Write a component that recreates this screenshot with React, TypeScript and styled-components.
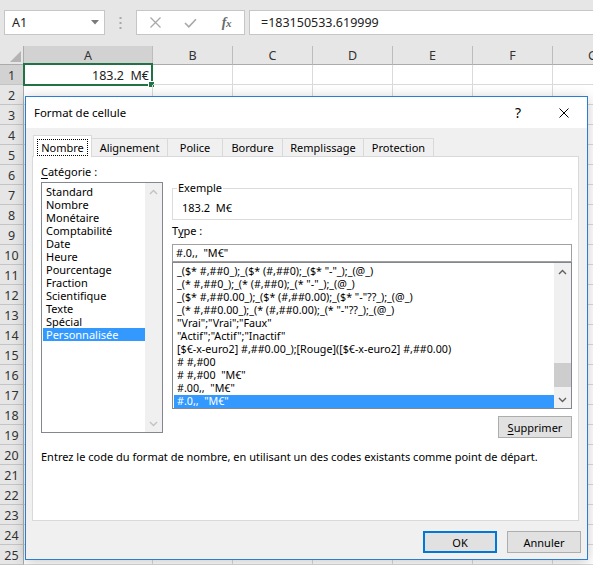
import React from 'react';
import styled, { createGlobalStyle, css } from 'styled-components';

const GlobalStyle = createGlobalStyle`
  html, body { margin: 0; padding: 0; }
  body {
    width: 593px; height: 565px; overflow: hidden;
    background: #e6e6e6;
    font-family: "Noto Sans", "Open Sans", sans-serif;
  }
  * { box-sizing: border-box; }
`;

const Screen = styled.div`
  position: relative;
  width: 593px;
  height: 565px;
  overflow: hidden;
  background: #e6e6e6;
`;

/* ---------- formula bar ---------- */
const FormulaBar = styled.div`
  display: flex;
  align-items: center;
  height: 46px;
  padding: 10px 0 11px 4px;
`;

const NameBox = styled.div`
  width: 101px;
  height: 25px;
  background: #fff;
  border: 1px solid #c6c6c6;
  display: flex;
  align-items: center;
  justify-content: space-between;
  padding: 0 5px 0 7px;
  font-size: 12.5px;
  color: #222;
`;

const Separator = styled.div`
  width: 31px;
  display: flex;
  justify-content: center;
  align-items: center;
`;

const FxBox = styled.div`
  width: 109px;
  height: 25px;
  background: #fff;
  border: 1px solid #c6c6c6;
  display: flex;
  align-items: center;
  padding-left: 1px;
`;

const FxSlot = styled.div`
  width: 36px;
  display: flex;
  align-items: center;
  justify-content: center;
`;

const FxText = styled.span`
  font-family: "Liberation Serif", serif;
  font-style: italic;
  font-weight: bold;
  color: #6a6a6a;
  font-size: 14px;
  letter-spacing: -0.5px;
  & > small { font-size: 11px; }
`;

const FormulaInput = styled.div`
  flex: 1;
  height: 25px;
  margin-left: 4px;
  background: #fff;
  border: 1px solid #c6c6c6;
  border-right: none;
  display: flex;
  align-items: center;
  padding-left: 11px;
  font-size: 12.5px;
  color: #222;
`;

/* ---------- sheet ---------- */
const Sheet = styled.div`
  display: grid;
  grid-template-columns: 24px 129px repeat(6, 80px);
  grid-template-rows: 19px repeat(25, 20px);
  background: #fff;
  font-family: "Noto Sans", sans-serif;
`;

const Corner = styled.div`
  background: #e6e6e6;
  border-right: 1px solid #ababab;
  border-bottom: 1px solid #ababab;
  display: flex;
  align-items: flex-end;
  justify-content: flex-end;
  padding: 0 2px 2px 0;
`;

const ColHeader = styled.div<{ $sel?: boolean }>`
  background: ${p => (p.$sel ? '#d2d2d2' : '#e6e6e6')};
  border-right: 1px solid #bcbcbc;
  border-bottom: 1px solid ${p => (p.$sel ? '#217346' : '#ababab')};
  display: flex;
  align-items: center;
  justify-content: center;
  font-size: 12.5px;
  color: #333;
`;

const RowHeader = styled.div<{ $sel?: boolean }>`
  background: ${p => (p.$sel ? '#d2d2d2' : '#e6e6e6')};
  border-right: 1px solid ${p => (p.$sel ? '#217346' : '#ababab')};
  border-bottom: 1px solid #c4c4c4;
  display: flex;
  align-items: center;
  justify-content: center;
  padding-top: 2px;
  font-size: 12.5px;
  color: #333;
`;

const Cell = styled.div`
  position: relative;
  border-right: 1px solid #dadada;
  border-bottom: 1px solid #dadada;
  display: flex;
  align-items: center;
  justify-content: flex-end;
  padding: 2px 3px 0 0;
  font-size: 12.5px;
  color: #222;
  white-space: pre;
`;

const Selection = styled.div`
  position: absolute;
  left: -1px;
  top: -2px;
  right: -1px;
  bottom: -2px;
  border: 2px solid #217346;
  pointer-events: none;
  &::after {
    content: '';
    position: absolute;
    right: -4px;
    bottom: -4px;
    width: 5px;
    height: 5px;
    background: #217346;
    border: 1px solid #fff;
  }
`;

/* ---------- dialog ---------- */
const Dialog = styled.div`
  position: absolute;
  left: 25px;
  top: 96px;
  width: 563px;
  height: 464px;
  border: 1px solid #2b7cd3;
  background: #f0f0f0;
  display: flex;
  flex-direction: column;
  box-shadow: 0 2px 12px rgba(0, 0, 0, 0.22);
  font-family: "Noto Sans", sans-serif;
  font-size: 11px;
  color: #000;
`;

const TitleBar = styled.div`
  height: 31px;
  background: #fff;
  display: flex;
  align-items: center;
  padding-left: 8px;
`;

const Title = styled.div`
  flex: 1;
  font-size: 11.4px;
`;

const TitleButton = styled.div`
  width: 46px;
  height: 31px;
  display: flex;
  align-items: center;
  justify-content: center;
  font-size: 14px;
`;

const Body = styled.div`
  flex: 1;
  display: flex;
  flex-direction: column;
  padding: 7px 8px 0 6px;
`;

const TabsRow = styled.div`
  height: 21px;
  display: flex;
  align-items: flex-end;
  padding-left: 1px;
`;

const Tab = styled.div<{ $w: number; $active?: boolean }>`
  width: ${p => p.$w}px;
  height: ${p => (p.$active ? 22 : 18)}px;
  margin-left: -1px;
  &:first-child { margin-left: 0; }
  margin-bottom: ${p => (p.$active ? -1 : 0)}px;
  border: 1px solid #d9d9d9;
  border-bottom: none;
  background: ${p => (p.$active ? '#fff' : '#f0f0f0')};
  position: relative;
  z-index: ${p => (p.$active ? 1 : 0)};
  display: flex;
  align-items: center;
  justify-content: center;
  font-size: 11px;
  ${p =>
    p.$active &&
    css`
      align-items: flex-end;
      padding-bottom: 1px;
    `}
`;

const FocusLabel = styled.span`
  border: 1px dotted #000;
  padding: 0 3px;
  line-height: 15px;
`;

const Panel = styled.div`
  height: 365px;
  background: #fff;
  border: 1px solid #d9d9d9;
  padding: 7px 0 0 8px;
  display: flex;
  flex-direction: column;
`;

const TopRow = styled.div`
  display: flex;
  gap: 9px;
  align-items: flex-start;
`;

const LeftCol = styled.div`
  width: 122px;
  display: flex;
  flex-direction: column;
`;

const RightCol = styled.div`
  width: 400px;
  display: flex;
  flex-direction: column;
  padding-top: 17px;
`;

const Label = styled.div<{ $mt?: number }>`
  line-height: 16px;
  margin-top: ${p => p.$mt ?? 0}px;
  margin-bottom: 2px;
  & u { text-decoration-thickness: 1px; text-underline-offset: 2px; }
`;

const ListBox = styled.div<{ $h: number; $fs?: number }>`
  height: ${p => p.$h}px;
  border: 1px solid #828790;
  background: #fff;
  display: flex;
  font-size: ${p => p.$fs ?? 11}px;
`;

const Items = styled.div`
  flex: 1;
  padding: 2px 0 0 1px;
  overflow: hidden;
  display: flex;
  flex-direction: column;
`;

const Item = styled.div<{ $sel?: boolean }>`
  height: 13px;
  line-height: 13px;
  padding-left: 3px;
  white-space: pre;
  overflow: clip;
  overflow-clip-margin: 3px;
  background: ${p => (p.$sel ? '#3399ff' : 'transparent')};
  color: ${p => (p.$sel ? '#fff' : '#000')};
  flex-shrink: 0;
`;

const ScrollBar = styled.div`
  width: 17px;
  background: #f0f0f0;
  display: flex;
  flex-direction: column;
`;

const ScrollArrow = styled.div`
  height: 17px;
  display: flex;
  align-items: center;
  justify-content: center;
`;

const Track = styled.div`
  flex: 1;
  display: flex;
  flex-direction: column;
  justify-content: flex-end;
  align-items: center;
  padding-bottom: 4px;
`;

const Thumb = styled.div`
  width: 17px;
  height: 24px;
  background: #cdcdcd;
`;

const Fieldset = styled.fieldset`
  margin: 0;
  border: 1px solid #dcdcdc;
  padding: 6px 0 4px 9px;
  min-width: 0;
`;

const Legend = styled.legend`
  padding: 0 1px;
  margin-left: -5px;
  line-height: 14px;
`;

const SampleValue = styled.div`
  line-height: 14px;
  white-space: pre;
`;

const TypeInput = styled.div`
  height: 18px;
  margin-top: 3px;
  border: 1px solid #a0a0a0;
  padding-left: 3px;
  line-height: 16px;
  font-size: 10.8px;
  white-space: pre;
`;

const Button = styled.div<{ $default?: boolean }>`
  width: 74px;
  height: 22px;
  background: #e1e1e1;
  border: ${p => (p.$default ? '2px solid #0078d7' : '1px solid #adadad')};
  display: flex;
  align-items: center;
  justify-content: center;
  font-size: 11px;
  & u { text-underline-offset: 2px; }
`;

const DeleteRow = styled.div`
  display: flex;
  justify-content: flex-end;
  margin-top: 7px;
`;

const Hint = styled.div`
  margin-top: 11px;
  line-height: 16px;
`;

const Footer = styled.div`
  display: flex;
  justify-content: flex-end;
  gap: 10px;
  margin-top: 10px;
  margin-right: -2px;
`;

/* ---------- icons ---------- */
const Caret = () => (
  <svg width="8" height="5" viewBox="0 0 8 5">
    <polygon points="0,0 8,0 4,4.5" fill="#7a7a7a" />
  </svg>
);

const Dots = () => (
  <svg width="3" height="12" viewBox="0 0 3 12">
    <rect x="0.5" y="0" width="2" height="2" fill="#a8a8a8" />
    <rect x="0.5" y="5" width="2" height="2" fill="#a8a8a8" />
    <rect x="0.5" y="10" width="2" height="2" fill="#a8a8a8" />
  </svg>
);

const XIcon = ({ size, color, w }: { size: number; color: string; w: number }) => (
  <svg width={size} height={size} viewBox={`0 0 ${size} ${size}`}>
    <path d={`M0.5 0.5 L${size - 0.5} ${size - 0.5} M${size - 0.5} 0.5 L0.5 ${size - 0.5}`} stroke={color} strokeWidth={w} fill="none" />
  </svg>
);

const Check = () => (
  <svg width="13" height="10" viewBox="0 0 13 10">
    <path d="M1 5 L4.8 8.8 L12 1.2" stroke="#a8a8a8" strokeWidth="1.6" fill="none" />
  </svg>
);

const Chevron = ({ up, color }: { up?: boolean; color: string }) => (
  <svg width="9" height="6" viewBox="0 0 9 6">
    <path d={up ? 'M1 5 L4.5 1.5 L8 5' : 'M1 1 L4.5 4.5 L8 1'} stroke={color} strokeWidth="1.4" fill="none" />
  </svg>
);

const CornerTriangle = () => (
  <svg width="11" height="11" viewBox="0 0 11 11">
    <polygon points="11,0 11,11 0,11" fill="#b4b4b4" />
  </svg>
);

/* ---------- data ---------- */
const columns = ['A', 'B', 'C', 'D', 'E', 'F', 'G'];
const rows = Array.from({ length: 25 }, (_, i) => i + 1);

const tabs: { label: string; w: number }[] = [
  { label: 'Nombre', w: 59 },
  { label: 'Alignement', w: 77 },
  { label: 'Police', w: 56 },
  { label: 'Bordure', w: 61 },
  { label: 'Remplissage', w: 82 },
  { label: 'Protection', w: 71 },
];

const categories = [
  'Standard',
  'Nombre',
  'Monétaire',
  'Comptabilité',
  'Date',
  'Heure',
  'Pourcentage',
  'Fraction',
  'Scientifique',
  'Texte',
  'Spécial',
  'Personnalisée',
];

const formats = [
  '_($* #,##0_);_($* (#,##0);_($* "-"_);_(@_)',
  '_(* #,##0_);_(* (#,##0);_(* "-"_);_(@_)',
  '_($* #,##0.00_);_($* (#,##0.00);_($* "-"??_);_(@_)',
  '_(* #,##0.00_);_(* (#,##0.00);_(* "-"??_);_(@_)',
  '"Vrai";"Vrai";"Faux"',
  '"Actif";"Actif";"Inactif"',
  '[$€-x-euro2] #,##0.00_);[Rouge]([$€-x-euro2] #,##0.00)',
  '# #,#00',
  '# #,#00  "M€"',
  '#.00,,  "M€"',
  '#.0,,  "M€"',
];

export default function App() {
  return (
    <Screen>
      <GlobalStyle />
      <FormulaBar>
        <NameBox>
          <span>A1</span>
          <Caret />
        </NameBox>
        <Separator>
          <Dots />
        </Separator>
        <FxBox>
          <FxSlot>
            <XIcon size={11} color="#a8a8a8" w={1.3} />
          </FxSlot>
          <FxSlot>
            <Check />
          </FxSlot>
          <FxSlot>
            <FxText>
              f<small>x</small>
            </FxText>
          </FxSlot>
        </FxBox>
        <FormulaInput>=183150533.619999</FormulaInput>
      </FormulaBar>

      <Sheet>
        <Corner>
          <CornerTriangle />
        </Corner>
        {columns.map(c => (
          <ColHeader key={c} $sel={c === 'A'}>
            {c}
          </ColHeader>
        ))}
        {rows.map(r => (
          <React.Fragment key={r}>
            <RowHeader $sel={r === 1}>{r}</RowHeader>
            {columns.map(c => (
              <Cell key={c}>
                {r === 1 && c === 'A' ? (
                  <>
                    183.2  M€
                    <Selection />
                  </>
                ) : null}
              </Cell>
            ))}
          </React.Fragment>
        ))}
      </Sheet>

      <Dialog>
        <TitleBar>
          <Title>Format de cellule</Title>
          <TitleButton>?</TitleButton>
          <TitleButton>
            <XIcon size={10} color="#000" w={1} />
          </TitleButton>
        </TitleBar>
        <Body>
          <TabsRow>
            {tabs.map((t, i) => (
              <Tab key={t.label} $w={t.w} $active={i === 0}>
                {i === 0 ? <FocusLabel>{t.label}</FocusLabel> : t.label}
              </Tab>
            ))}
          </TabsRow>
          <Panel>
            <TopRow>
              <LeftCol>
                <Label>
                  <u>C</u>atégorie :
                </Label>
                <ListBox $h={251}>
                  <Items>
                    {categories.map((c, i) => (
                      <Item key={c} $sel={i === categories.length - 1}>
                        {c}
                      </Item>
                    ))}
                  </Items>
                  <ScrollBar>
                    <ScrollArrow>
                      <Chevron up color="#c2c2c2" />
                    </ScrollArrow>
                    <Track />
                    <ScrollArrow>
                      <Chevron color="#c2c2c2" />
                    </ScrollArrow>
                  </ScrollBar>
                </ListBox>
              </LeftCol>
              <RightCol>
                <Fieldset>
                  <Legend>Exemple</Legend>
                  <SampleValue>183.2  M€</SampleValue>
                </Fieldset>
                <Label $mt={3}>
                  T<u>y</u>pe :
                </Label>
                <TypeInput>#.0,,  "M€"</TypeInput>
                <ListBox $h={147} $fs={10.7}>
                  <Items>
                    {formats.map((f, i) => (
                      <Item key={f} $sel={i === formats.length - 1}>
                        {f}
                      </Item>
                    ))}
                  </Items>
                  <ScrollBar>
                    <ScrollArrow>
                      <Chevron up color="#606060" />
                    </ScrollArrow>
                    <Track>
                      <Thumb />
                    </Track>
                    <ScrollArrow>
                      <Chevron color="#606060" />
                    </ScrollArrow>
                  </ScrollBar>
                </ListBox>
                <DeleteRow>
                  <Button>
                    <span>
                      <u>S</u>upprimer
                    </span>
                  </Button>
                </DeleteRow>
              </RightCol>
            </TopRow>
            <Hint>
              Entrez le code du format de nombre, en utilisant un des codes existants comme point de départ.
            </Hint>
          </Panel>
          <Footer>
            <Button $default>OK</Button>
            <Button>Annuler</Button>
          </Footer>
        </Body>
      </Dialog>
    </Screen>
  );
}
